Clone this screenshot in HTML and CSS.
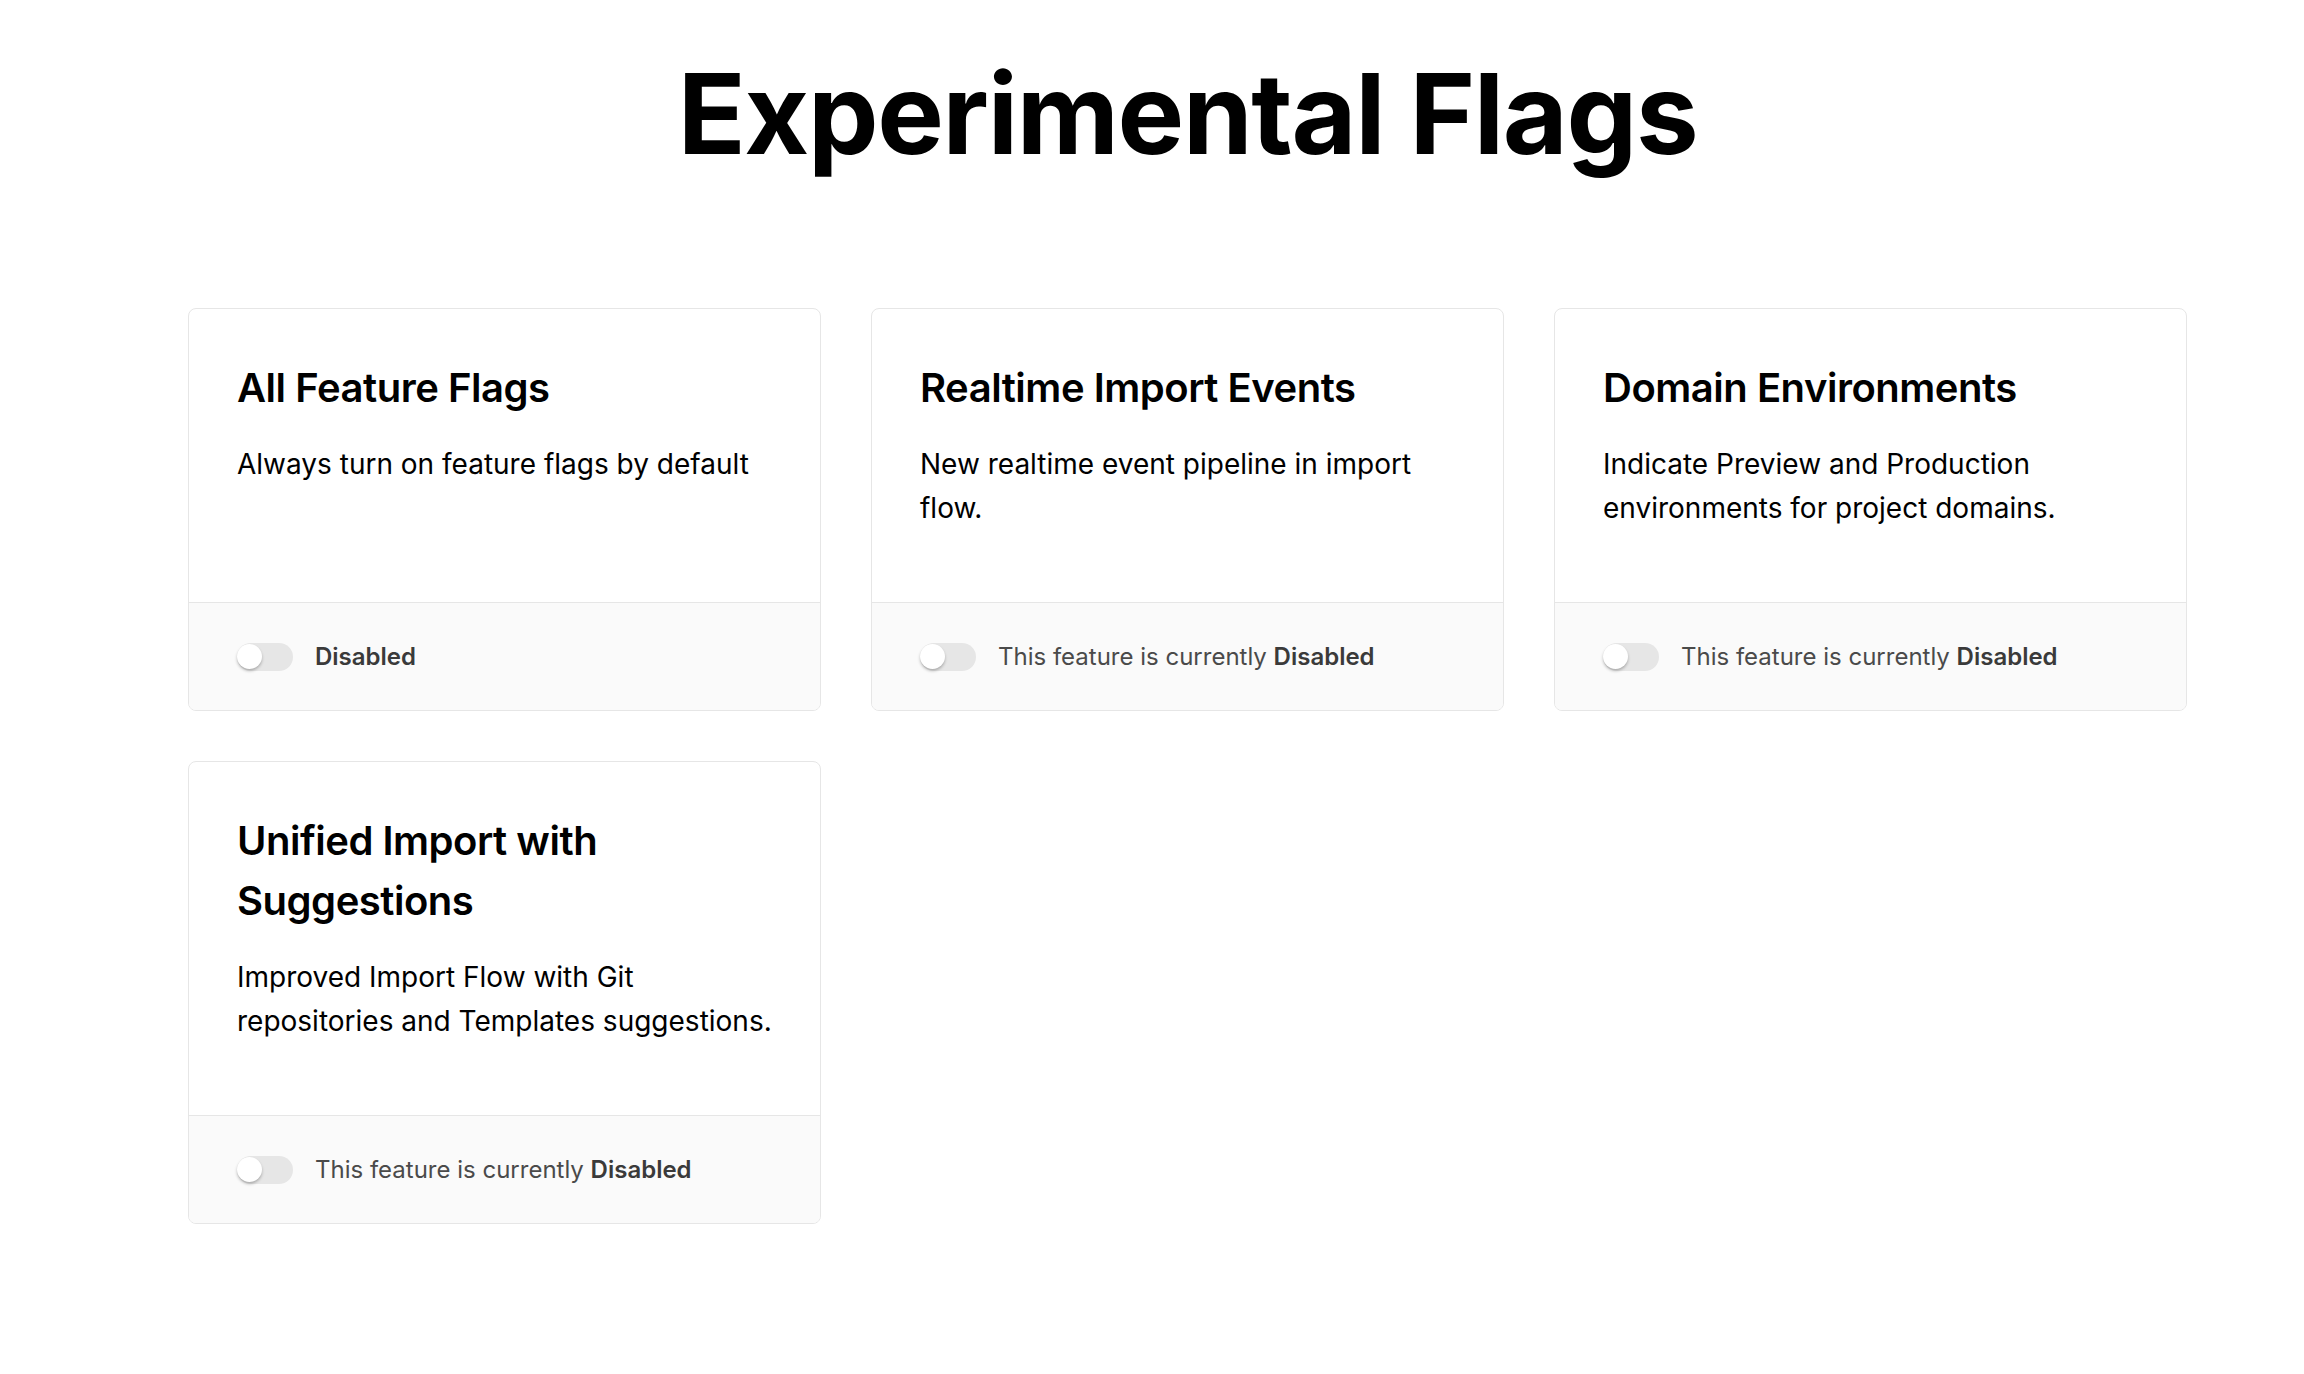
FILE: index.html
```html
<!DOCTYPE html>
<html lang="en">
<head>
    <meta charset="UTF-8">
    <meta name="viewport" content="width=device-width, initial-scale=1.0">
    <title>Experimental Flags</title>
    <link rel="stylesheet" href="styles.css">
</head>
<body>
<div class="page">
    <h1>Experimental Flags</h1>

    <div class="flags">
        <div class="flag-card">
            <div class="flag-body">
                <h2>All Feature Flags</h2>
                <p>Always turn on feature flags by default</p>
            </div>
            <div class="flag-footer">
                <span class="toggle"><span class="knob"></span></span>
                <span class="status"><strong>Disabled</strong></span>
            </div>
        </div>

        <div class="flag-card">
            <div class="flag-body">
                <h2>Realtime Import Events</h2>
                <p>New realtime event pipeline in import flow.</p>
            </div>
            <div class="flag-footer">
                <span class="toggle"><span class="knob"></span></span>
                <span class="status">This feature is currently <strong>Disabled</strong></span>
            </div>
        </div>

        <div class="flag-card">
            <div class="flag-body">
                <h2>Domain Environments</h2>
                <p>Indicate Preview and Production environments for project domains.</p>
            </div>
            <div class="flag-footer">
                <span class="toggle"><span class="knob"></span></span>
                <span class="status">This feature is currently <strong>Disabled</strong></span>
            </div>
        </div>

        <div class="flag-card">
            <div class="flag-body">
                <h2>Unified Import with Suggestions</h2>
                <p>Improved Import Flow with Git repositories and Templates suggestions.</p>
            </div>
            <div class="flag-footer">
                <span class="toggle"><span class="knob"></span></span>
                <span class="status">This feature is currently <strong>Disabled</strong></span>
            </div>
        </div>
    </div>
</div>
</body>
</html>
```

FILE: styles.css
```css
body {
    font-family: Inter, "Noto Sans", sans-serif;
    margin: 0;
    background-color: #fff;
    color: #000;
}
.page {
    margin: 0 117px 0 188px;
}
h1 {
    margin: 45px 0 127px;
    font-size: 112px;
    line-height: 136px;
    font-weight: 700;
    letter-spacing: -0.012em;
    text-align: center;
}
.flags {
    display: grid;
    grid-template-columns: repeat(3, 1fr);
    gap: 50px;
}
.flag-card {
    display: flex;
    flex-direction: column;
    border: 1px solid #e6e6e6;
    border-radius: 8px;
    overflow: hidden;
}
.flag-body {
    flex: 1;
    padding: 49px 48px 48px;
}
.flag-body h2 {
    margin: 0;
    font-size: 40px;
    line-height: 60px;
    font-weight: 600;
    letter-spacing: -0.012em;
}
.flag-body p {
    margin: 24px 0 24px;
    font-size: 28px;
    line-height: 44px;
}
.flag-footer {
    display: flex;
    align-items: center;
    gap: 22px;
    padding: 39px 48px 38px;
    border-top: 1px solid #e6e6e6;
    background-color: #fafafa;
}
.toggle {
    position: relative;
    width: 56px;
    height: 28px;
    border-radius: 14px;
    background-color: #e6e6e6;
    flex-shrink: 0;
}
.toggle .knob {
    position: absolute;
    left: 0;
    top: 1px;
    width: 25px;
    height: 25px;
    border-radius: 50%;
    background-color: #fff;
    box-shadow: 0 2px 3px rgba(0, 0, 0, 0.25);
}
.status {
    font-size: 24px;
    line-height: 30px;
    color: #4a4a4a;
}
.status strong {
    font-weight: 600;
    color: #3a3a3a;
}
```
